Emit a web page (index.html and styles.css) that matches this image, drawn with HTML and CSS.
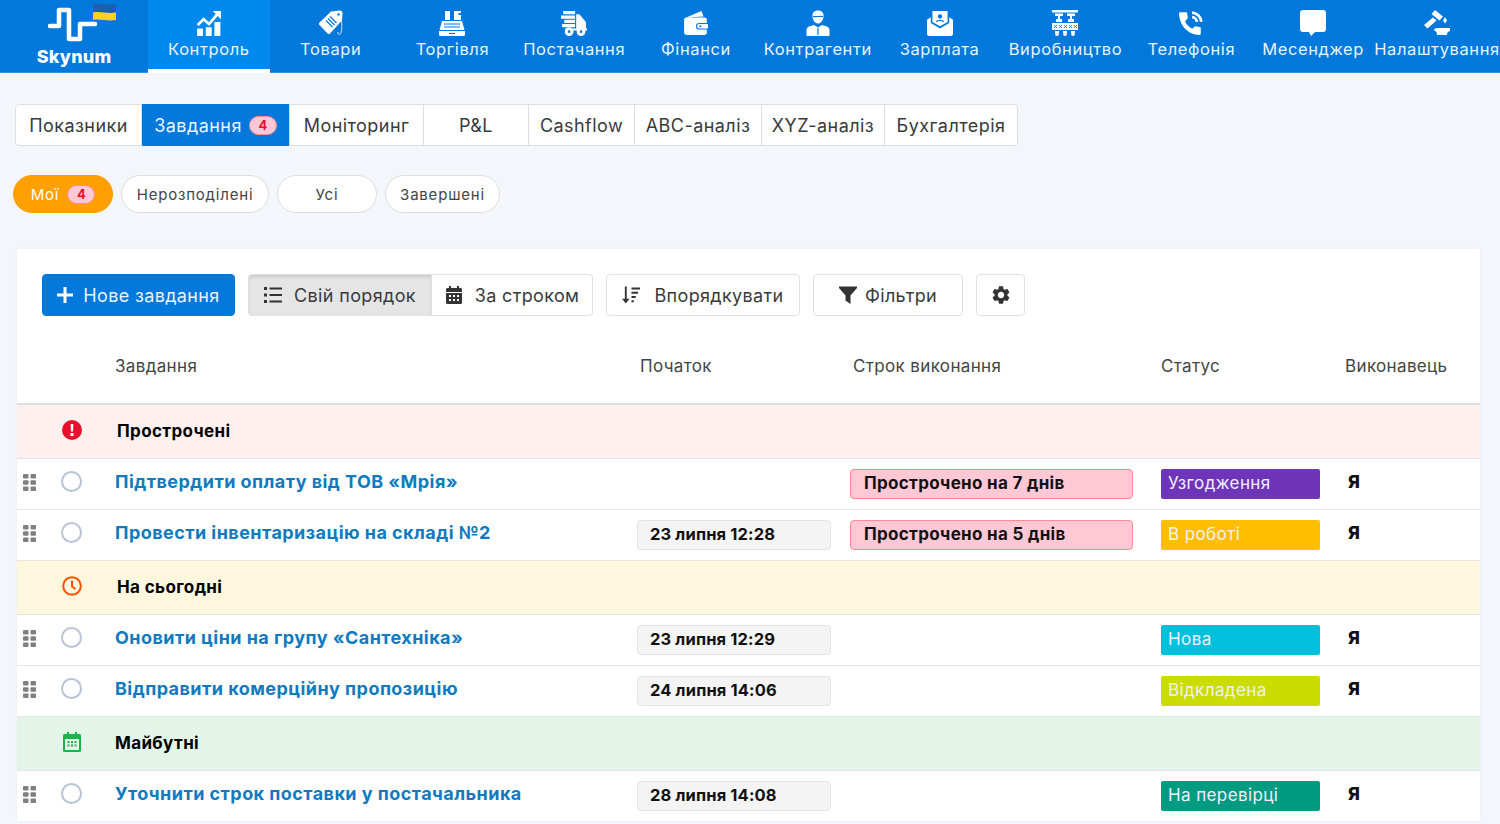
FILE: index.html
```html
<!DOCTYPE html>
<html lang="uk">
<head>
  <meta charset="UTF-8" />
  <meta name="viewport" content="width=device-width, initial-scale=1.0"/>
  <title>Skynum</title>
  <link rel="stylesheet" href="styles.css">
</head>
<body>
  <svg class="sprite">
    <symbol id="i-grip" viewBox="0 0 13 17"><rect x="0" y="0" width="5.500" height="4.600" rx="1"/><rect x="7.500" y="0" width="5.500" height="4.600" rx="1"/><rect x="0" y="6.200" width="5.500" height="4.600" rx="1"/><rect x="7.500" y="6.200" width="5.500" height="4.600" rx="1"/><rect x="0" y="12.400" width="5.500" height="4.600" rx="1"/><rect x="7.500" y="12.400" width="5.500" height="4.600" rx="1"/></symbol>
    <symbol id="i-cal" viewBox="0 0 16 18"><path d="M3 0h2v2h6V0h2v2h1.500A1.500 1.500 0 0 1 16 3.500V6H0V3.500A1.500 1.500 0 0 1 1.500 2H3zM0 7h16v9.500a1.500 1.500 0 0 1-1.500 1.500h-13A1.500 1.500 0 0 1 0 16.500zm3 2v2h2V9zm4 0v2h2V9zm4 0v2h2V9zm-8 4v2h2v-2zm4 0v2h2v-2zm4 0v2h2v-2z"/></symbol>
  </svg>

  <nav class="topnav">
    <a class="logo" href="#">
      <svg class="logo-mark" viewBox="0 0 70 42" width="70" height="42">
        <path class="pulse" d="M2 26h9V10h10v29h11V24h15"/>
        <path class="flag-top" d="M45 4c7-1.500 14 1.500 23 0v8.500c-9 1.500-16-1.500-23 0z"/>
        <path class="flag-bottom" d="M45 12.500c7-1.500 14 1.500 23 0V20c-9 1.500-16-1.500-23 0z"/>
      </svg>
      <span class="logo-name">Skynum</span>
    </a>
    <a class="nav-item active" href="#">
      <svg viewBox="0 0 24 24"><path d="M1 17v7h5.500v-7zm8-1v8h5.500v-8zm8-5v13h5.500V11z"/><path class="line" d="M1.500 14l5.500-5.500 5 4.500 8.500-10"/><path d="M15.500 1H23v7.500z"/></svg>
      <span>Контроль</span>
    </a>
    <a class="nav-item" href="#">
      <svg viewBox="0 0 26 26"><path d="M13 1.500L22 .5c1.500 0 2.500 1 2.500 2.500l-.5 7.500L12 23.500c-.8.8-1.700.8-2.500 0L1.500 15c-.8-.8-.8-1.700 0-2.500z"/><path class="cut" d="M8 10.500l6.500 6.500M10 8.500l6.500 6.500M12 6.500l6.500 6.500"/><path class="thin" d="M21 3.500c3 5 3.500 13 2 19-.7 3-3.500 2.500-3-.5"/><circle class="hole" cx="20.500" cy="4.500" r="1.200"/></svg>
      <span>Товари</span>
    </a>
    <a class="nav-item" href="#">
      <svg viewBox="0 0 26 26"><path d="M0 21h26v3.500a1.500 1.500 0 0 1-1.500 1.500h-23A1.500 1.500 0 0 1 0 24.500zM3 11h20l2.500 9H.5z"/><path d="M6 1h5v9H6zM15 1h7v2h-2.500v2H22v5h-7z"/><path class="cut" d="M5 14h16M5 17h16M10 23.500h6"/></svg>
      <span>Торгівля</span>
    </a>
    <a class="nav-item" href="#">
      <svg viewBox="0 0 24 24"><path d="M2 1h11v3H2zM0 5h13v3H0zM3 9h10v3H3zM1 13h12v3H1zM14 4h3l6 7v7h-9zM4 17h20v2H4z"/><circle cx="7.500" cy="20" r="4"/><circle cx="18.500" cy="20" r="4"/><circle class="hole" cx="7.500" cy="20" r="1.200"/><circle class="hole" cx="18.500" cy="20" r="1.200"/></svg>
      <span>Постачання</span>
    </a>
    <a class="nav-item" href="#">
      <svg viewBox="0 0 24 24"><path d="M3 7L17 1l2 5zM1 9a2 2 0 0 1 2-2h17a2 2 0 0 1 2 2v3h-7a3 3 0 0 0 0 6h7v3a2 2 0 0 1-2 2H3a2 2 0 0 1-2-2z"/><path d="M15 13h8v4h-8a2 2 0 0 1 0-4z"/><circle class="hole" cx="16" cy="15" r="1"/></svg>
      <span>Фінанси</span>
    </a>
    <a class="nav-item" href="#">
      <svg viewBox="0 0 24 26"><path d="M6.500 7C6 3 8 .5 12 .5S18 3 17.500 7c-.5 4-3 6.500-5.500 6.500S7 11 6.500 7z"/><path class="cut" d="M7 6.500c3 .5 7-.5 10 0"/><path d="M8 15l4 2.500 4-2.500 5 1.500c1.500.5 2.500 2 2.500 3.500v6H.5v-6c0-1.500 1-3 2.500-3.500z"/><path class="cut" d="M12 18v7"/></svg>
      <span>Контрагенти</span>
    </a>
    <a class="nav-item" href="#">
      <svg viewBox="0 0 24 24"><path d="M5 1h14v10l-7 4-7-4zM0 9l3.500-2.200V12l8.500 5 8.500-5V6.800L24 9v13a2 2 0 0 1-2 2H2a2 2 0 0 1-2-2z"/><circle class="hole" cx="12" cy="6" r="2"/><path class="cut" d="M8.500 11c1-2 6-2 7 0"/></svg>
      <span>Зарплата</span>
    </a>
    <a class="nav-item wide" href="#">
      <svg viewBox="0 0 26 26"><path d="M0 0h26v2.500H0zM3 3.500h8V6H3zM15 3.500h8V6h-8zM6 6h2v3H6zM18 6h2v3h-2zM4 9h6v3H4zM16 9h6v3h-6z"/><path d="M0 13h26v7H0zM3 21h4v2H3zM11 21h4v2h-4zM19 21h4v2h-4z"/><circle cx="5" cy="24.200" r="1.800"/><circle cx="13" cy="24.200" r="1.800"/><circle cx="21" cy="24.200" r="1.800"/><path class="cut thin" d="M2 15l3 3m0-3l-3 3M7 15l3 3m0-3l-3 3M12 15l3 3m0-3l-3 3M17 15l3 3m0-3l-3 3M22 15l3 3m0-3l-3 3"/></svg>
      <span>Виробництво</span>
    </a>
    <a class="nav-item" href="#">
      <svg viewBox="0 0 24 24"><path d="M6.600 10.800c1.400 2.800 3.800 5.100 6.600 6.600l2.200-2.200c.3-.3.700-.4 1-.2 1.100.4 2.300.6 3.600.6.600 0 1 .4 1 1V22c0 .6-.4 1-1 1C9.600 23 1 14.400 1 3c0-.6.400-1 1-1h5.500c.6 0 1 .4 1 1 0 1.300.2 2.500.6 3.600.1.300 0 .7-.2 1z"/><path class="arc" d="M13 2.500c4.500.2 8.300 4 8.500 8.500M13 6.500c2.300.2 4.300 2.200 4.500 4.500"/></svg>
      <span>Телефонія</span>
    </a>
    <a class="nav-item" href="#">
      <svg viewBox="0 0 26 26"><path d="M3 0h20a3 3 0 0 1 3 3v16a3 3 0 0 1-3 3h-8l-4 4-2-4H3a3 3 0 0 1-3-3V3a3 3 0 0 1 3-3z"/></svg>
      <span>Месенджер</span>
    </a>
    <a class="nav-item last" href="#">
      <svg viewBox="0 0 26 26"><path d="M11 0l8 6.500-3.500 4-8-6.500zM9 7.500l3.500 3-9 8L0 15z"/><path d="M21 7l2 3.500-2 3-2-3zM13 18h13v3c-2 .5-3 1.500-3 4H13c0-3-1-4-3-4.500 0-1.500 1-2.500 3-2.500z"/></svg>
      <span>Налаштування</span>
    </a>
  </nav>

  <main class="page">
    <div class="tabs">
      <a class="tab t1" href="#">Показники</a>
      <a class="tab t2 active" href="#">Завдання <b class="count">4</b></a>
      <a class="tab t3" href="#">Моніторинг</a>
      <a class="tab t4" href="#">P&amp;L</a>
      <a class="tab t5" href="#">Cashflow</a>
      <a class="tab t6" href="#">ABC-аналіз</a>
      <a class="tab t7" href="#">XYZ-аналіз</a>
      <a class="tab t8" href="#">Бухгалтерія</a>
    </div>

    <div class="pills">
      <a class="pill p1 active" href="#">Мої <b class="count">4</b></a>
      <a class="pill p2" href="#">Нерозподілені</a>
      <a class="pill p3" href="#">Усі</a>
      <a class="pill p4" href="#">Завершені</a>
    </div>

    <section class="card">
      <div class="toolbar">
        <button class="btn primary">
          <svg class="ico" viewBox="0 0 16 16"><path d="M6.500 0h3v6.500H16v3H9.500V16h-3V9.500H0v-3h6.500z"/></svg>
          Нове завдання
        </button>
        <div class="btn-group">
          <button class="btn pressed">
            <svg class="ico" viewBox="0 0 18 16"><path d="M0 0h3v3H0zM0 6.500h3v3H0zM0 13h3v3H0zM5.500.5H18v2H5.500zM5.500 7H18v2H5.500zM5.500 13.500H18v2H5.500z"/></svg>
            Свій порядок
          </button>
          <button class="btn by-date">
            <svg class="ico"><use href="#i-cal"/></svg>
            За строком
          </button>
        </div>
        <button class="btn sort">
          <svg class="ico" viewBox="0 0 19 18"><path d="M3 0h2v13h3l-4 5-4-5h3zM10 1h9v2.200h-9zM10 5.500h7v2.200h-7zM10 10h4.500v2.200H10zM10 14.500h2.500v2.200H10z"/></svg>
          Впорядкувати
        </button>
        <button class="btn filter">
          <svg class="ico" viewBox="0 0 18 18"><path d="M0 .5h18v1.500l-6.500 7.500V18l-5-3.500V9.500L0 2z"/></svg>
          Фільтри
        </button>
        <button class="btn gear">
          <svg class="ico" viewBox="2 2 20 20"><path d="M19.140 12.940c.04-.3.06-.61.06-.94 0-.32-.02-.64-.07-.94l2.030-1.580c.18-.14.23-.41.12-.61l-1.920-3.320c-.12-.22-.37-.29-.59-.22l-2.390.96c-.5-.38-1.030-.7-1.620-.94l-.36-2.540c-.04-.24-.24-.41-.48-.41h-3.840c-.24 0-.43.17-.47.41l-.36 2.540c-.59.24-1.130.57-1.620.94l-2.390-.96c-.22-.08-.47 0-.59.22L2.740 8.870c-.12.21-.08.47.12.61l2.030 1.580c-.05.3-.09.63-.09.94s.02.64.07.94l-2.030 1.580c-.18.14-.23.41-.12.61l1.920 3.320c.12.22.37.29.59.22l2.390-.96c.5.38 1.030.7 1.620.94l.36 2.540c.05.24.24.41.48.41h3.840c.24 0 .44-.17.47-.41l.36-2.540c.59-.24 1.130-.56 1.620-.94l2.390.96c.22.08.47 0 .59-.22l1.920-3.320c.12-.22.07-.47-.12-.61l-2.010-1.580zM12 15.600c-1.980 0-3.600-1.620-3.600-3.600s1.620-3.600 3.600-3.600 3.600 1.620 3.600 3.600-1.620 3.600-3.600 3.600z"/></svg>
        </button>
      </div>

      <div class="row head">
        <span></span><span></span>
        <span>Завдання</span>
        <span class="h-col">Початок</span>
        <span class="h-col">Строк виконання</span>
        <span>Статус</span>
        <span>Виконавець</span>
      </div>

      <div class="group overdue">
        <svg class="g-ico" viewBox="0 0 20 20"><circle cx="10" cy="10" r="10" fill="#e8112d"/><path d="M8.600 4h2.800l-.4 7.500H9zM8.500 13h3v3h-3z" fill="#fff"/></svg>
        <b>Прострочені</b>
      </div>
      <div class="row task">
        <svg class="grip"><use href="#i-grip"/></svg><i class="check"></i>
        <a class="title" href="#">Підтвердити оплату від ТОВ «Мрія»</a>
        <span></span>
        <span class="date late">Прострочено на 7 днів</span>
        <span class="status purple">Узгодження</span>
        <b class="who">Я</b>
      </div>
      <div class="row task">
        <svg class="grip"><use href="#i-grip"/></svg><i class="check"></i>
        <a class="title" href="#">Провести інвентаризацію на складі №2</a>
        <span class="date start">23 липня 12:28</span>
        <span class="date late">Прострочено на 5 днів</span>
        <span class="status amber">В роботі</span>
        <b class="who">Я</b>
      </div>

      <div class="group today">
        <svg class="g-ico" viewBox="0 0 20 20"><circle cx="10" cy="10" r="8.800" fill="none" stroke="#ff5200" stroke-width="2"/><path d="M10 4.500V10.500l3.500 2.500" fill="none" stroke="#ff5200" stroke-width="2"/></svg>
        <b>На сьогодні</b>
      </div>
      <div class="row task">
        <svg class="grip"><use href="#i-grip"/></svg><i class="check"></i>
        <a class="title" href="#">Оновити ціни на групу «Сантехніка»</a>
        <span class="date start">23 липня 12:29</span>
        <span></span>
        <span class="status cyan">Нова</span>
        <b class="who">Я</b>
      </div>
      <div class="row task">
        <svg class="grip"><use href="#i-grip"/></svg><i class="check"></i>
        <a class="title" href="#">Відправити комерційну пропозицію</a>
        <span class="date start">24 липня 14:06</span>
        <span></span>
        <span class="status lime">Відкладена</span>
        <b class="who">Я</b>
      </div>

      <div class="group future">
        <svg class="g-ico cal" viewBox="0 0 18 20"><path d="M4 0h2v2h6V0h2v2h2.500A1.500 1.500 0 0 1 18 3.500v15a1.500 1.500 0 0 1-1.500 1.500h-15A1.500 1.500 0 0 1 0 18.500v-15A1.500 1.500 0 0 1 1.500 2H4zM2 7v11h14V7zm2.500 2h2v2h-2zm3.500 0h2v2H8zm3.500 0h2v2h-2zm-7 3.500h2v2h-2zm3.500 0h2v2H8zm3.500 0h2v2h-2z" fill="#18b54a"/></svg>
        <b>Майбутні</b>
      </div>
      <div class="row task">
        <svg class="grip"><use href="#i-grip"/></svg><i class="check"></i>
        <a class="title" href="#">Уточнити строк поставки у постачальника</a>
        <span class="date start">28 липня 14:08</span>
        <span></span>
        <span class="status teal">На перевірці</span>
        <b class="who">Я</b>
      </div>
    </section>
  </main>
</body>
</html>
```

FILE: styles.css
```css
* {
  box-sizing: border-box;
  font-family: Inter, "Noto Sans", Arial, sans-serif;
}

html, body {
  height: 100%;
}

body {
  margin: 0;
  overflow: hidden;
  background: #f4f6fb;
  color: #333;
}

a {
  color: inherit;
  text-decoration: none;
}

.sprite {
  display: none;
}

/* top bar */
.topnav {
  display: flex;
  height: 73px;
  background: #0078dc;
  border-bottom: 1px solid #2a93e8;
  color: #fff;
}

.logo {
  width: 148px;
  display: flex;
  flex-direction: column;
  align-items: center;
}

.logo-mark {
  margin-left: 18px;
  height: 42px;
}

.pulse {
  fill: none;
  stroke: #fff;
  stroke-width: 4.500;
  stroke-linejoin: round;
  stroke-linecap: round;
}

.flag-top { fill: #1a62ad; }
.flag-bottom { fill: #ffd21e; }

.logo-name {
  margin-top: 5px;
  font-size: 18px;
  line-height: 20px;
  font-weight: 800;
  letter-spacing: 0.2px;
}

.nav-item {
  width: 121.800px;
  height: 73px;
  display: flex;
  flex-direction: column;
  align-items: center;
  padding-top: 10px;
  font-size: 16.500px;
  letter-spacing: 0.6px;
  color: #eaf4fd;
  white-space: nowrap;
}

.nav-item svg {
  width: 26px;
  height: 26px;
  fill: #fff;
  margin-bottom: 3px;
}

.nav-item.active {
  background: #0088ec;
  border-bottom: 4px solid #fff;
}

.nav-item.wide {
  width: 130px;
}

.nav-item.last {
  width: 126px;
}

.nav-item .line,
.nav-item .arc {
  fill: none;
  stroke: #fff;
  stroke-width: 2.500;
}

.nav-item .cut {
  fill: none;
  stroke: #0078dc;
  stroke-width: 1.200;
}

.nav-item .thin {
  fill: none;
  stroke: #fff;
  stroke-width: 0.800;
}

.nav-item .cut.thin {
  stroke: #0078dc;
}

.nav-item .hole {
  fill: #0078dc;
}

/* page */
.page {
  padding: 31px 20px 0 17px;
}

.tabs {
  display: flex;
  width: 1003px;
  height: 42px;
  margin-left: -2px;
  background: #fff;
  border: 1px solid #dedede;
  border-radius: 4px;
}

.tab {
  display: flex;
  align-items: center;
  justify-content: center;
  gap: 7px;
  border-right: 1px solid #dedede;
  font-size: 18px;
  letter-spacing: 0.45px;
  color: #3a3a3a;
  white-space: nowrap;
}

.tab:last-child { border-right: 0; }

.tab.active {
  background: #0078dc;
  color: #eaf4fd;
  margin: -1px 0;
}

.t1 { width: 126px; }
.t2 { width: 148px; }
.t3 { width: 134px; }
.t4 { width: 105px; }
.t5 { width: 106px; }
.t6 { width: 127px; }
.t7 { width: 123px; }
.t8 { flex: 1; }

.count {
  display: inline-block;
  width: 28px;
  height: 19px;
  border: 1px solid #ff8a94;
  border-radius: 10px;
  background: #ffc8d4;
  color: #e8112d;
  font-size: 13px;
  line-height: 17px;
  font-weight: 700;
  text-align: center;
  letter-spacing: 0;
}

.pills {
  display: flex;
  gap: 8px;
  margin: 29px 0 36px -4px;
}

.pill {
  height: 38px;
  display: flex;
  align-items: center;
  justify-content: center;
  gap: 8px;
  background: #fff;
  border: 1px solid #dedede;
  border-radius: 19px;
  font-size: 15px;
  letter-spacing: 0.8px;
  color: #444;
}

.pill.active {
  background: #ff9f00;
  border-color: #ff9f00;
  color: #fff;
}

.p1 { width: 100px; }
.p2 { width: 148px; }
.p3 { width: 100px; }
.p4 { width: 115px; }

/* card */
.card {
  width: 1463px;
  background: #fff;
  padding-top: 25px;
  box-shadow: 0 0 3px rgba(0, 0, 0, 0.05);
}

.toolbar {
  display: flex;
  gap: 13px;
  padding-left: 25px;
}

.btn {
  height: 42px;
  display: flex;
  align-items: center;
  justify-content: center;
  gap: 10px;
  padding: 0;
  background: #fff;
  border: 1px solid #e2e2e2;
  border-radius: 4px;
  font-size: 18px;
  letter-spacing: 0.35px;
  color: #3a3a3a;
}

.ico {
  width: 18px;
  height: 18px;
  fill: #333;
  flex: none;
}

.btn.primary {
  width: 193px;
  background: #0078dc;
  border-color: #0078dc;
  color: #eaf4fd;
}

.btn.primary .ico {
  width: 16px;
  height: 16px;
  fill: #fff;
}

.btn-group {
  display: flex;
}

.btn.pressed {
  width: 184px;
  gap: 12px;
  background: #e5e5e5;
  border-radius: 4px 0 0 4px;
  box-shadow: inset 0 2px 3px rgba(0, 0, 0, 0.12);
}

.btn.by-date {
  width: 161px;
  gap: 12px;
  border-left: 0;
  border-radius: 0 4px 4px 0;
}

.btn.sort {
  width: 194px;
  gap: 14px;
}

.btn.filter {
  width: 150px;
  gap: 8px;
}

.btn.gear {
  width: 49px;
}

/* task table */
.row {
  display: grid;
  grid-template-columns: 36px 62px 522px 213px 311px 184px 135px;
  align-items: center;
}

.row.head {
  height: 89px;
  padding-top: 12px;
  border-bottom: 2px solid #dedede;
  font-size: 17px;
  letter-spacing: 0.35px;
  color: #444;
}

.h-col {
  padding-left: 3px;
}

.group {
  height: 54px;
  display: grid;
  grid-template-columns: 98px 1fr;
  align-items: center;
  border-bottom: 1px solid #e4e4e4;
  font-size: 17px;
  letter-spacing: 0.36px;
  color: #000;
}

.group b {
  font-weight: 700;
  margin: -2px 0 0 2px;
}

.g-ico {
  width: 20px;
  height: 20px;
  margin: -3px 0 0 45px;
}

.overdue { background: #fff0f0; }
.today { background: #fef6dd; }
.future { background: #e3f4e8; }
.future b { margin-left: 0; }

.task {
  height: 51px;
  border-bottom: 1px solid #e6e6e6;
}

.task:last-child {
  height: 50px;
  border-bottom: 0;
}

.grip {
  width: 13px;
  height: 17px;
  margin: -4px 0 0 6px;
  fill: #808080;
}

.check {
  width: 21px;
  height: 21px;
  margin: -5px 0 0 8px;
  border: 2px solid #b8c4d6;
  border-radius: 50%;
}

.title {
  margin-top: -6px;
  font-size: 18px;
  font-weight: 700;
  letter-spacing: 0.45px;
  color: #0f7abf;
  white-space: nowrap;
}

.date {
  height: 30px;
  display: flex;
  align-items: center;
  padding: 0 0 2px 13px;
  border-radius: 4px;
  font-weight: 700;
  color: #111;
}

.date.start {
  width: 194px;
  padding-left: 12px;
  background: #f4f4f4;
  border: 1px solid #e4e4e4;
  font-size: 16.500px;
  letter-spacing: 0.14px;
}

.date.late {
  width: 283px;
  background: #ffc8d4;
  border: 1px solid #ff8a94;
  font-size: 17px;
  letter-spacing: 0.31px;
}

.status {
  width: 159px;
  height: 30px;
  display: flex;
  align-items: center;
  padding: 0 0 2px 7px;
  border-radius: 2px;
  font-size: 17px;
  letter-spacing: 0.4px;
  color: #f0f0ff;
}

.purple { background: #6f35b8; }
.amber { background: #ffbf00; }
.cyan { background: #00c0dc; }
.lime { background: #cadc00; }
.teal { background: #009b80; }

.who {
  margin: -5px 0 0 3px;
  font-size: 18px;
  font-weight: 800;
  color: #111;
}
```
